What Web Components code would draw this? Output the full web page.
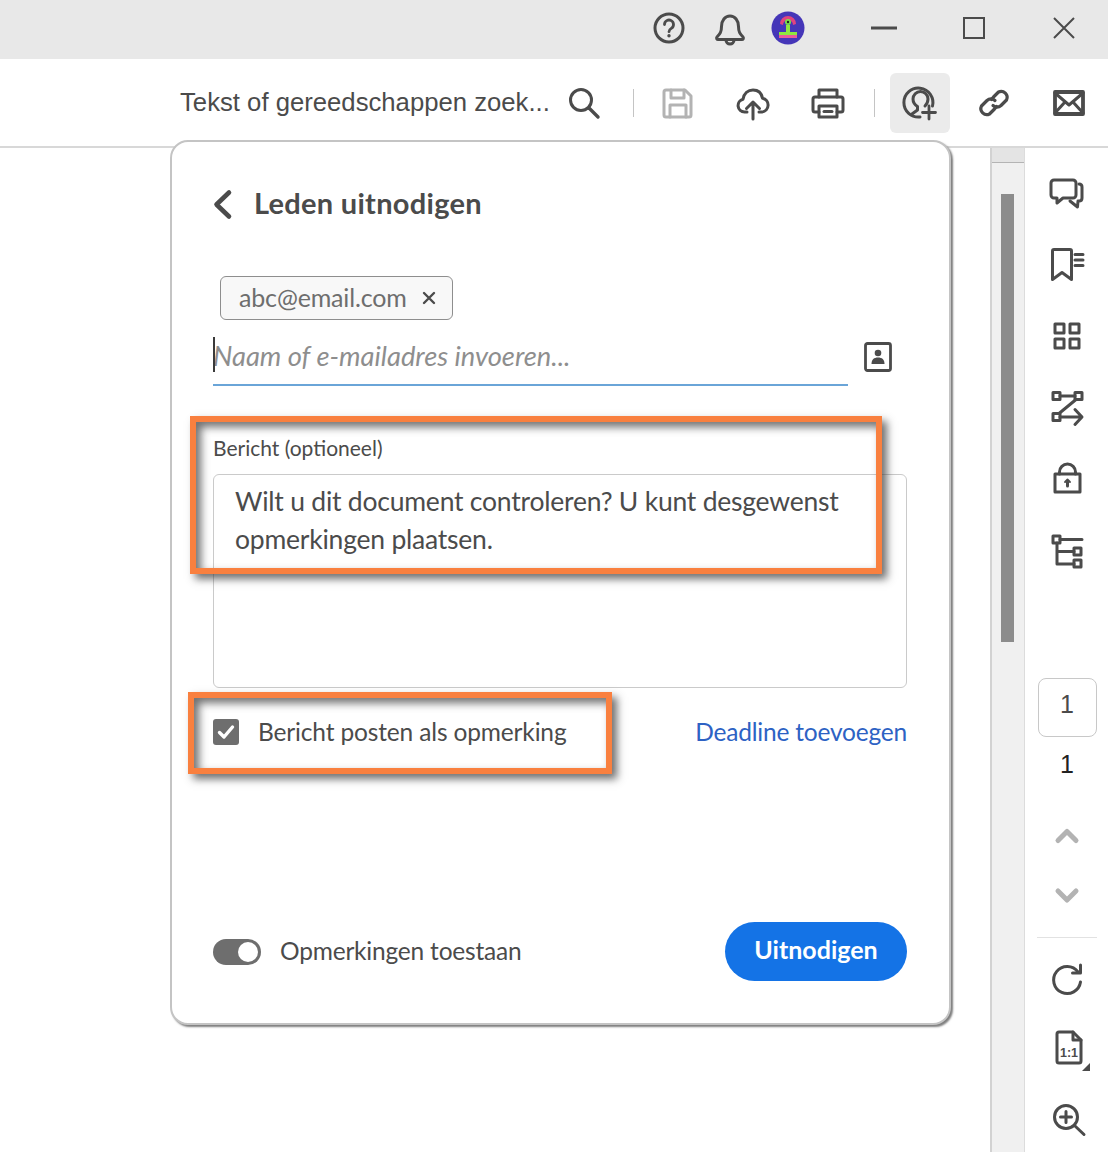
<!DOCTYPE html>
<html lang="nl">
<head>
<meta charset="utf-8">
<title>Leden uitnodigen</title>
<style>
  html, body { margin: 0; padding: 0; background: #fff; }
  body { width: 1108px; height: 1152px; overflow: hidden; font-family: "Lato", "Noto Sans", sans-serif; color: #4b4b4b; }
</style>
</head>
<body>
<app-shell>
  <title-bar slot="title"></title-bar>
  <tool-bar slot="tools"></tool-bar>
  <invite-panel slot="panel">
    <mail-chip slot="chips">abc@email.com</mail-chip>
    <span slot="message">Wilt u dit document controleren? U kunt desgewenst opmerkingen plaatsen.</span>
  </invite-panel>
  <scroll-track slot="scroll"></scroll-track>
  <side-rail slot="rail"></side-rail>
</app-shell>

<script>
// every icon is drawn 1:1 in a 36x36 box
const ICONS = {
  help: '<circle cx="18" cy="18" r="14" stroke-width="3"/><path d="M13.500 14.500a4.500 4.500 0 1 1 6.800 3.900c-1.500.9-2.300 1.700-2.300 3.300" stroke-width="2.800"/><circle cx="18" cy="25.800" r="1.700" fill="currentColor" stroke="none"/>',
  bell: '<path d="M5 26c3-3 4.500-5 4.500-10.500C9.500 9.500 13 5 18 5s8.500 4.500 8.500 10.500C26.500 21 28 23 31 26c1 1.200 0 2.500-1 2.500H6c-1 0-2-1.300-1-2.500z"/><path d="M14 29a4 4 0 0 0 8 0"/>',
  search: '<circle cx="15" cy="15" r="10.500" stroke-width="3"/><path d="M23 23l9 9" stroke-width="3.400"/>',
  save: '<path d="M6 5h19l6 6v19a2 2 0 0 1-2 2H6a2 2 0 0 1-2-2V7a2 2 0 0 1 2-2z"/><path d="M11 5v8h13V5M10 32V20h16v12"/>',
  upload: '<path d="M12 27H9.500a6.500 6.500 0 0 1-1.500-12.800C9 8.500 13 5 18 5c5 0 8.500 3 9.500 8.200A7 7 0 0 1 27 27h-3"/><path d="M18 34V17M11.500 23.500L18 17l6.500 6.500"/>',
  print: '<path d="M9 12V5h18v7"/><path d="M9 27H5a2 2 0 0 1-2-2V14a2 2 0 0 1 2-2h26a2 2 0 0 1 2 2v11a2 2 0 0 1-2 2h-4"/><path d="M9 21h18v11H9z"/><path d="M14 26.500h8"/>',
  invite: '<path d="M30.500 21A14.500 14.500 0 1 0 18 32"/><path d="M10 29l5.500-4v-3.500c-3-2-4.500-4.500-4.500-7.500a7.500 7.500 0 0 1 15 0c0 3-1 5-3 7"/><path d="M27 21v13M20.500 27.500h13" stroke-width="2.800"/>',
  link: '<path d="M15.500 14.500l2-2.500 5-5a6 6 0 0 1 8 8l-5.500 5.500a6 6 0 0 1-8 0" stroke-width="3.200"/><path d="M20.500 21.500l-2 2.500-5 5a6 6 0 0 1-8-8l5.500-5.500a6 6 0 0 1 8 0" stroke-width="3.200"/>',
  mail: '<path d="M4 7h28v22H4z" stroke-width="3.800"/><path d="M4 8l14 12L32 8M4 28l10-11M32 28L22 17" stroke-width="3"/>',
  comments: '<g transform="translate(0 2)"><path d="M5 4h19a3 3 0 0 1 3 3v12a3 3 0 0 1-3 3H14l-6 5v-5H5a3 3 0 0 1-3-3V7a3 3 0 0 1 3-3z"/><path d="M30 8c2 0 3 1 3 3v11c0 2-1 3-3 3h-1l-.500 6-7.500-6"/></g>',
  bookmarks: '<path d="M5 3.500h16a1.500 1.500 0 0 1 1.500 1.500V33.500L13 26.500l-9.500 7V5A1.500 1.500 0 0 1 5 3.500z"/><path d="M26 8.500h8M26 14h8M26 19.500h8"/>',
  thumbs: '<path d="M6 6h9v9H6zM21 6h9v9h-9zM6 21h9v9H6zM21 21h9v9h-9z"/>',
  order: '<g transform="translate(0 -1.500)"><path d="M4 4h7v7H4zM26 4h7v7h-7zM4 25h7v7H4z"/><path d="M11 7.500h15M27 11L10 25M11 28.500h21M26 21l7 7.500-7 7.500"/></g>',
  lock: '<g transform="translate(0 -1)"><path d="M6 13h25v18H6z"/><path d="M10.500 13v-2a8 8 0 0 1 16 0v2"/><path d="M18.500 25v-4" stroke-width="3"/><path d="M16 21l2.500-2.500L21 21" stroke-width="1.800"/></g>',
  tree: '<path d="M4 2h7v7H4zM25 14h7v7h-7zM25 26h7v7h-7z"/><path d="M11 5.500h22M8 9v21h17M8 17.500h17"/>',
  up: '<path d="M9 22.500l9-9 9 9" stroke-width="5"/>',
  down: '<path d="M9 14l9 9 9-9" stroke-width="5"/>',
  rotate: '<path d="M29 11A13.500 13.500 0 1 0 31.500 21"/><path d="M31.500 4v8h-8"/>',
  fit: '<path d="M10 2h14l8 8v21a2 2 0 0 1-2 2H10a2 2 0 0 1-2-2V4a2 2 0 0 1 2-2z"/><path d="M24 2v8h8"/><text x="20" y="26.500" text-anchor="middle" font-family="Liberation Sans, sans-serif" font-weight="700" font-size="12.500" fill="currentColor" stroke="none">1:1</text><path d="M41 33v8h-8z" fill="currentColor" stroke="none"/>',
  zoom: '<circle cx="17" cy="16" r="11.500" stroke-width="3"/><path d="M25.500 24.500l9.500 9M17 10.500v11M11.500 16h11" stroke-width="3"/>',
  back: '<path d="M16 3.500L3.500 15.500 16 27.500" stroke-width="4.600"/>',
  contact: '<rect x="5.500" y="4.500" width="25" height="27" rx="2" stroke-width="2.800"/><circle cx="18" cy="14" r="3.300" fill="currentColor" stroke="none"/><path d="M11.500 25c0-4.500 2.500-6.500 6.500-6.500s6.500 2 6.500 6.500z" fill="currentColor" stroke="none"/>'
};

class UiIcon extends HTMLElement {
  constructor() {
    super();
    this.attachShadow({ mode: 'open' });
  }
  connectedCallback() {
    const name = this.getAttribute('name');
    this.shadowRoot.innerHTML = `
      <style>
        :host { display: block; width: 36px; height: 36px; flex: none; color: #4b4b4b; }
        svg { display: block; overflow: visible; fill: none; stroke: currentColor; stroke-width: 3; stroke-linecap: round; stroke-linejoin: round; }
      </style>
      <svg width="36" height="36" viewBox="0 0 36 36">${ICONS[name] || ''}</svg>`;
  }
}
customElements.define('ui-icon', UiIcon);

class AppShell extends HTMLElement {
  constructor() {
    super();
    this.attachShadow({ mode: 'open' }).innerHTML = `
      <style>
        :host { display: flex; flex-direction: column; width: 1108px; height: 1152px; }
        .main { display: flex; flex: 1; min-height: 0; }
        .canvas { flex: 1; padding-left: 170px; min-width: 0; }
      </style>
      <slot name="title"></slot>
      <slot name="tools"></slot>
      <div class="main">
        <div class="canvas"><slot name="panel"></slot></div>
        <slot name="scroll"></slot>
        <slot name="rail"></slot>
      </div>`;
  }
}
customElements.define('app-shell', AppShell);

class TitleBar extends HTMLElement {
  constructor() {
    super();
    this.attachShadow({ mode: 'open' }).innerHTML = `
      <style>
        :host { display: flex; align-items: center; height: 59px; background: #e8e8e8; padding: 0 0 3px 651px; box-sizing: border-box; }
        .avatar { display: block; margin-left: 23px; flex: none; }
        ui-icon.bell { margin-left: 25px; margin-top: 1px; }
        .win { display: flex; margin-left: 34px; margin-top: -1px; }
        .win span { width: 90px; height: 36px; display: flex; align-items: center; justify-content: center; }
      </style>
      <ui-icon name="help"></ui-icon>
      <ui-icon name="bell" class="bell"></ui-icon>
      <svg class="avatar" width="34" height="34" viewBox="0 0 34 34">
        <circle cx="17" cy="17" r="16.500" fill="#4536b8"/>
        <path d="M9 13a8 8 0 0 1 16 0l-3 1a5 5 0 0 0-10 0z" fill="#e0457f"/>
        <circle cx="17" cy="11" r="3" fill="#7be04a"/><circle cx="17" cy="11" r="1.200" fill="#222"/>
        <path d="M15 14h4v7h-4z" fill="#8ee83f"/>
        <path d="M8 21h18v3H8z" fill="#8ee83f"/>
        <path d="M8 24h18v3H8z" fill="#e85a9c"/>
      </svg>
      <div class="win">
        <span><svg width="26" height="4"><path d="M0 2h26" stroke="#4b4b4b" stroke-width="3"/></svg></span>
        <span><svg width="22" height="22"><path d="M1 1h20v20H1z" fill="none" stroke="#4b4b4b" stroke-width="2"/></svg></span>
        <span><svg width="22" height="22"><path d="M1 1l20 20M21 1L1 21" fill="none" stroke="#4b4b4b" stroke-width="2"/></svg></span>
      </div>`;
  }
}
customElements.define('title-bar', TitleBar);

class ToolBar extends HTMLElement {
  constructor() {
    super();
    this.attachShadow({ mode: 'open' }).innerHTML = `
      <style>
        :host { display: flex; align-items: center; height: 89px; box-sizing: border-box; border-bottom: 2px solid #d8d8d8; padding-left: 180px; background: #fff; }
        .find { width: 370px; flex: none; font: 25.700px "Liberation Sans", sans-serif; color: #4b4b4b; white-space: nowrap; }
        .sep { width: 1px; height: 28px; background: #c4c4c4; flex: none; }
        .active { width: 60px; height: 60px; background: #ebebeb; border-radius: 6px; display: flex; align-items: center; justify-content: center; flex: none; margin-left: 15px; }
      </style>
      <span class="find">Tekst of gereedschappen zoek...</span>
      <ui-icon name="search" style="margin-left:16px"></ui-icon>
      <span class="sep" style="margin-left:31px"></span>
      <ui-icon name="save" style="margin-left:26px;color:#b3b3b3"></ui-icon>
      <ui-icon name="upload" style="margin-left:39px"></ui-icon>
      <ui-icon name="print" style="margin-left:39px"></ui-icon>
      <span class="sep" style="margin-left:28px"></span>
      <div class="active"><ui-icon name="invite"></ui-icon></div>
      <ui-icon name="link" style="margin-left:26px"></ui-icon>
      <ui-icon name="mail" style="margin-left:39px"></ui-icon>`;
  }
}
customElements.define('tool-bar', ToolBar);

class MailChip extends HTMLElement {
  constructor() {
    super();
    this.attachShadow({ mode: 'open' }).innerHTML = `
      <style>
        :host { display: inline-flex; align-items: center; height: 44px; width: 233px; box-sizing: border-box; padding: 0 0 2px 18px; border: 1px solid #8e8e8e; border-radius: 6px; background: #f8f8f8; color: #6e6e6e; font-size: 25px; letter-spacing: -.16px; white-space: nowrap; }
        svg { margin: 2px 0 0 15px; flex: none; }
      </style>
      <slot></slot>
      <svg width="14" height="14"><path d="M2 2l10 10M12 2L2 12" stroke="#4b4b4b" stroke-width="2.400" stroke-linecap="round"/></svg>`;
  }
}
customElements.define('mail-chip', MailChip);

class NoteHighlight extends HTMLElement {
  constructor() {
    super();
    this.attachShadow({ mode: 'open' }).innerHTML = `
      <style>
        :host { display: block; position: absolute; box-sizing: border-box; border: 6px solid #f9803f; pointer-events: none;
          box-shadow: 5px 5px 8px rgba(50,50,50,.7), inset 5px 5px 8px rgba(50,50,50,.7); }
      </style>`;
  }
}
customElements.define('note-highlight', NoteHighlight);

class InvitePanel extends HTMLElement {
  constructor() {
    super();
    this.attachShadow({ mode: 'open' }).innerHTML = `
      <style>
        :host { display: flex; flex-direction: column; position: relative; z-index: 1; box-sizing: border-box; width: 781px; height: 885px; margin-top: -8px;
          padding: 42px 42px 42px 41px; background: #fff; border: 2px solid #c4c4c4; border-radius: 18px; box-shadow: 2px 2px 2px #7e7e7e; }
        .head { display: flex; align-items: center; height: 40px; }
        .head ui-icon { width: 20px; height: 31px; }
        h2 { margin: 0 0 0 21px; padding-bottom: 4px; font-size: 29px; font-weight: 700; letter-spacing: .28px; color: #4b4b4b; }
        .chips { display: block; margin: 52px 0 0 7px; height: 44px; }
        .who { display: flex; align-items: center; height: 66px; }
        .field { position: relative; box-sizing: border-box; width: 635px; height: 66px; padding-top: 19px; border-bottom: 2px solid #6aa5d8; color: #8e8e8e; font-style: italic; font-size: 27.300px; line-height: 34px; }
        .caret { position: absolute; left: 0; top: 17px; width: 2px; height: 35px; background: #3a3a3a; }
        .who ui-icon { margin-left: 12px; margin-top: 8px; }
        label { display: block; margin-top: 48px; height: 28px; line-height: 28px; font-size: 21px; color: #4b4b4b; }
        .msg { box-sizing: border-box; margin-top: 12px; height: 214px; padding: 7px 20px 0 21px; border: 1px solid #cacaca; border-radius: 6px; font-size: 26.500px; letter-spacing: -.22px; line-height: 38px; color: #4b4b4b; }
        .row { display: flex; align-items: center; justify-content: space-between; margin-top: 24px; height: 40px; }
        .check { display: flex; align-items: center; font-size: 24.500px; letter-spacing: -.15px; }
        .check span { padding-bottom: 2px; }
        .box { width: 26px; height: 26px; border-radius: 3px; background: #6e6e6e; margin-right: 19px; flex: none; }
        a { color: #2d62c4; font-size: 24.500px; letter-spacing: -.2px; text-decoration: none; padding-bottom: 2px; }
        .foot { display: flex; align-items: center; justify-content: space-between; margin-top: auto; }
        .allow { display: flex; align-items: center; font-size: 24.500px; letter-spacing: -.2px; }
        .allow span:last-child { padding-bottom: 2px; }
        .toggle { position: relative; width: 48px; height: 26px; border-radius: 13px; background: #6e6e6e; margin-right: 19px; flex: none; }
        .toggle::after { content: ""; position: absolute; right: 3px; top: 3px; width: 20px; height: 20px; border-radius: 50%; background: #fff; }
        button { width: 182px; height: 59px; border: 0; border-radius: 30px; background: #1473e6; color: #fff; font: 700 25px "Lato", "Noto Sans", sans-serif; padding: 0 0 5px; }
        note-highlight.a { left: 18px; top: 274px; width: 692px; height: 158px; }
        note-highlight.b { left: 16px; top: 550px; width: 424px; height: 82px; }
      </style>
      <div class="head"><ui-icon name="back"></ui-icon><h2>Leden uitnodigen</h2></div>
      <div class="chips"><slot name="chips"></slot></div>
      <div class="who">
        <div class="field"><span class="caret"></span>Naam of e-mailadres invoeren...</div>
        <ui-icon name="contact"></ui-icon>
      </div>
      <label>Bericht (optioneel)</label>
      <div class="msg"><slot name="message"></slot></div>
      <div class="row">
        <div class="check">
          <svg class="box" viewBox="0 0 26 26"><path d="M6.500 13.500l4.500 4.500 8.500-10" fill="none" stroke="#fff" stroke-width="3.400" stroke-linecap="round" stroke-linejoin="round"/></svg>
          <span>Bericht posten als opmerking</span>
        </div>
        <a>Deadline toevoegen</a>
      </div>
      <div class="foot">
        <div class="allow"><span class="toggle"></span><span>Opmerkingen toestaan</span></div>
        <button>Uitnodigen</button>
      </div>
      <note-highlight class="a"></note-highlight>
      <note-highlight class="b"></note-highlight>`;
  }
}
customElements.define('invite-panel', InvitePanel);

class ScrollTrack extends HTMLElement {
  constructor() {
    super();
    this.attachShadow({ mode: 'open' }).innerHTML = `
      <style>
        :host { display: flex; flex-direction: column; align-items: center; width: 35px; box-sizing: border-box; flex: none; background: #f0f0f0; border-left: 2px solid #d2d2d2; border-right: 1px solid #dcdcdc; }
        .btn { align-self: stretch; height: 14px; background: #e4e4e4; border-bottom: 1px solid #b4b4b4; flex: none; }
        .thumb { width: 13px; height: 448px; margin-top: 31px; margin-left: -1px; background: #8c8c8c; flex: none; }
      </style>
      <div class="btn"></div>
      <div class="thumb"></div>`;
  }
}
customElements.define('scroll-track', ScrollTrack);

class SideRail extends HTMLElement {
  constructor() {
    super();
    this.attachShadow({ mode: 'open' }).innerHTML = `
      <style>
        :host { display: flex; flex-direction: column; align-items: center; width: 83px; flex: none; padding: 8px 0 0 1px; box-sizing: border-box; font-family: "Liberation Sans", sans-serif; }
        .tool { height: 72px; display: flex; align-items: center; margin-left: -1px; }
        .page { box-sizing: border-box; width: 59px; height: 59px; margin-top: 90px; border: 1px solid #c8c8c8; border-radius: 8px; display: flex; align-items: center; justify-content: center; font-size: 25px; color: #4b4b4b; padding-bottom: 6px; }
        .total { height: 54px; line-height: 54px; font-size: 25px; color: #222; }
        hr { width: 60px; margin: 24px 0 0; border: 0; border-top: 1px solid #e2e2e2; }
      </style>
      <div class="tool"><ui-icon name="comments"></ui-icon></div>
      <div class="tool"><ui-icon name="bookmarks"></ui-icon></div>
      <div class="tool"><ui-icon name="thumbs"></ui-icon></div>
      <div class="tool"><ui-icon name="order"></ui-icon></div>
      <div class="tool"><ui-icon name="lock"></ui-icon></div>
      <div class="tool"><ui-icon name="tree"></ui-icon></div>
      <div class="page">1</div>
      <div class="total">1</div>
      <ui-icon name="up" style="margin-top:27px;color:#b3b3b3"></ui-icon>
      <ui-icon name="down" style="margin-top:23px;color:#b3b3b3"></ui-icon>
      <hr>
      <ui-icon name="rotate" style="margin-top:23px"></ui-icon>
      <ui-icon name="fit" style="margin-top:33px"></ui-icon>
      <ui-icon name="zoom" style="margin-top:35px"></ui-icon>`;
  }
}
customElements.define('side-rail', SideRail);
</script>
</body>
</html>
